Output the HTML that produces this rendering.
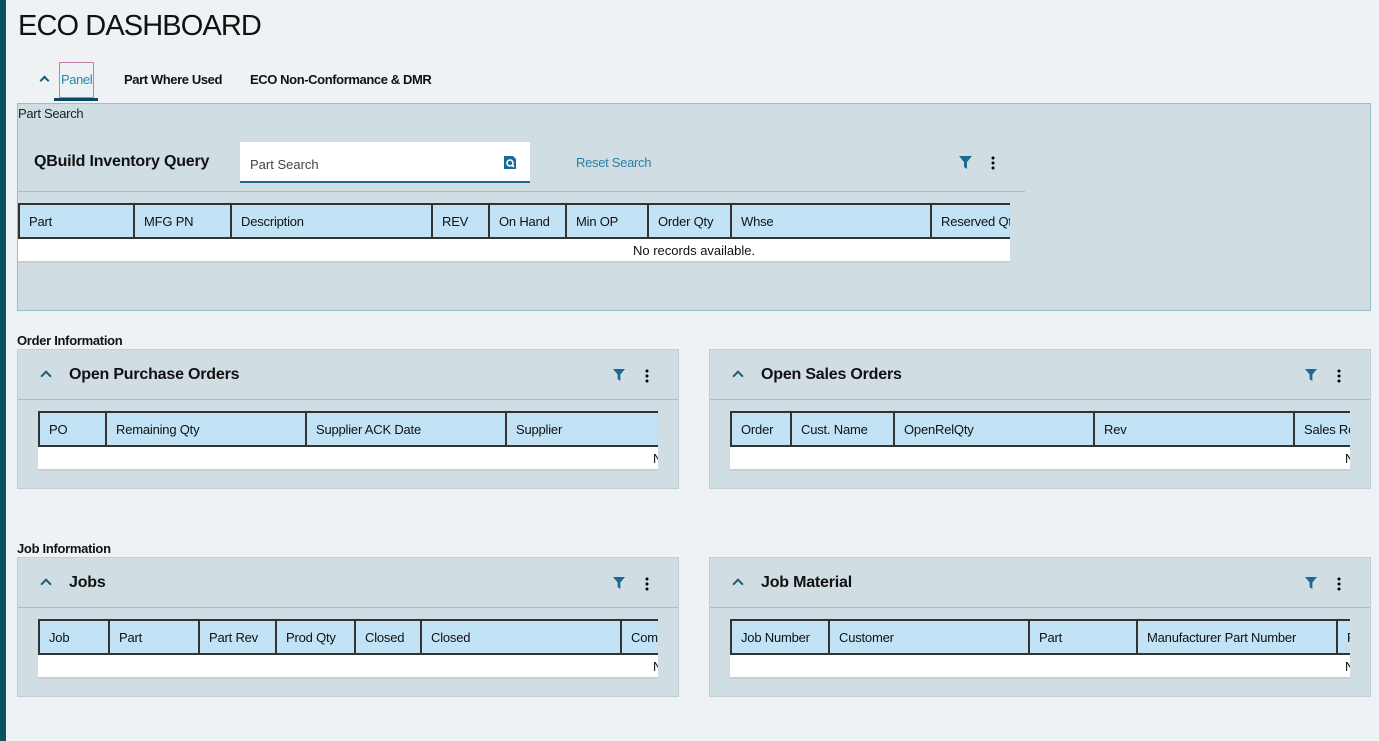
<!DOCTYPE html>
<html><head><meta charset="utf-8"><style>
*{box-sizing:border-box;margin:0;padding:0}
body{width:1379px;height:741px;background:#eef2f5;font-family:"Liberation Sans",sans-serif;color:#111;position:relative;overflow:hidden}
.abs{position:absolute}
.bar{left:0;top:0;width:6px;height:741px;background:#0b5063}
h1{position:absolute;left:18px;top:10px;font-weight:normal;font-size:29px;letter-spacing:-0.9px;color:#111}
.tab{position:absolute;top:72px;font-size:13px;font-weight:bold;color:#111;letter-spacing:-0.4px}
.card{position:absolute;background:#d0dee3;border:1px solid #bfd0d6}
.hline{position:absolute;height:1px;background:#9fc0cc}
.tbl{position:absolute;overflow:hidden}
.th{display:flex;height:36px;background:#c2e3f5;border-top:2px solid #333;border-bottom:2px solid #333;border-left:2px solid #333}
.th div{flex:none;border-right:2px solid #333;font-size:13px;padding:0 0 0 9px;line-height:34px;white-space:nowrap;overflow:hidden;letter-spacing:-0.2px}
.tb{height:24px;background:#fff;border-bottom:2px solid #ccc;font-size:13px;line-height:24px;position:relative}
.title{position:absolute;font-size:16px;font-weight:bold;color:#111;letter-spacing:-0.2px}
.chev{position:absolute;width:8px;height:8px;border-left:2px solid #1a5b78;border-top:2px solid #1a5b78;transform:rotate(45deg)}
.sec{position:absolute;font-size:13px;font-weight:bold;color:#111;letter-spacing:-0.3px}
</style></head><body>
<div class="abs bar"></div>
<h1>ECO DASHBOARD</h1>
<div class="chev" style="left:41px;top:77px;width:7px;height:7px"></div>
<div class="abs" style="left:59px;top:62px;width:35px;height:36px;border:1px solid #c080a8"></div>
<div class="tab" style="left:61px;color:#2a83a8;font-weight:normal">Panel</div>
<div class="abs" style="left:54px;top:98px;width:44px;height:3px;background:#0b4a63"></div>
<div class="tab" style="left:124px">Part Where Used</div>
<div class="tab" style="left:250px">ECO Non-Conformance &amp; DMR</div>

<div class="card" style="left:17px;top:103px;width:1354px;height:208px;border-color:#95bfcc"></div>
<div class="abs" style="left:18px;top:106px;font-size:13px;color:#222;letter-spacing:-0.3px">Part Search</div>
<div class="title" style="left:34px;top:153px;font-size:16px">QBuild Inventory Query</div>
<div class="abs" style="left:240px;top:142px;width:290px;height:41px;background:#fff;border-bottom:2px solid #1d6a93"></div>
<div class="abs" style="left:250px;top:157px;font-size:13px;color:#444">Part Search</div>
<svg class="abs" style="left:503px;top:155px" width="14" height="15" viewBox="0 0 14 15"><path d="M1 1h9l3 3v10H1z" fill="#1b6a94"/><circle cx="7" cy="8" r="3" fill="none" stroke="#fff" stroke-width="1.6"/><path d="M9 10l2 2" stroke="#fff" stroke-width="1.6"/></svg>
<div class="abs" style="left:576px;top:155px;font-size:13px;color:#2a7ea6;letter-spacing:-0.3px">Reset Search</div>
<svg class="abs" style="left:959px;top:156px" width="13" height="13" viewBox="0 0 13 13"><path d="M0 0h13L8 6v7L5 11V6z" fill="#1b6a94"/></svg>
<svg class="abs" style="left:991px;top:156px" width="4" height="14"><circle cx="2" cy="2" r="1.5"/><circle cx="2" cy="7" r="1.5"/><circle cx="2" cy="12" r="1.5"/></svg>
<div class="hline" style="left:18px;top:191px;width:1007px"></div>
<div class="tbl" style="left:18px;top:203px;width:992px">
<div class="th"><div style="width:115px">Part</div><div style="width:97px">MFG PN</div><div style="width:201px">Description</div><div style="width:57px">REV</div><div style="width:77px">On Hand</div><div style="width:82px">Min OP</div><div style="width:83px">Order Qty</div><div style="width:200px">Whse</div><div style="width:200px">Reserved Qty</div></div>
<div class="tb"><span style="position:absolute;left:615px">No records available.</span></div>
</div>

<div class="sec" style="left:17px;top:333px">Order Information</div>
<div class="sec" style="left:17px;top:541px">Job Information</div>

<div class="card" style="left:17px;top:349px;width:662px;height:140px"></div>
<div class="hline" style="left:18px;top:399px;width:660px"></div>
<div class="chev" style="left:42px;top:372px"></div>
<div class="title" style="left:69px;top:366px">Open Purchase Orders</div>
<svg class="abs" style="left:613px;top:369px" width="12" height="12" viewBox="0 0 13 13"><path d="M0 0h13L8 6v7L5 11V6z" fill="#1b6a94"/></svg>
<svg class="abs" style="left:645px;top:369px" width="4" height="14"><circle cx="2" cy="2" r="1.5"/><circle cx="2" cy="7" r="1.5"/><circle cx="2" cy="12" r="1.5"/></svg>
<div class="tbl" style="left:38px;top:411px;width:620px">
<div class="th"><div style="width:67px">PO</div><div style="width:200px">Remaining Qty</div><div style="width:200px">Supplier ACK Date</div><div style="width:200px">Supplier</div></div>
<div class="tb"><span style="position:absolute;left:615px">No</span></div>
</div>

<div class="card" style="left:709px;top:349px;width:662px;height:140px"></div>
<div class="hline" style="left:710px;top:399px;width:660px"></div>
<div class="chev" style="left:734px;top:372px"></div>
<div class="title" style="left:761px;top:366px">Open Sales Orders</div>
<svg class="abs" style="left:1305px;top:369px" width="12" height="12" viewBox="0 0 13 13"><path d="M0 0h13L8 6v7L5 11V6z" fill="#1b6a94"/></svg>
<svg class="abs" style="left:1337px;top:369px" width="4" height="14"><circle cx="2" cy="2" r="1.5"/><circle cx="2" cy="7" r="1.5"/><circle cx="2" cy="12" r="1.5"/></svg>
<div class="tbl" style="left:730px;top:411px;width:620px">
<div class="th"><div style="width:60px">Order</div><div style="width:103px">Cust. Name</div><div style="width:200px">OpenRelQty</div><div style="width:200px">Rev</div><div style="width:200px">Sales Rep</div></div>
<div class="tb"><span style="position:absolute;left:615px">No</span></div>
</div>

<div class="card" style="left:17px;top:557px;width:662px;height:140px"></div>
<div class="hline" style="left:18px;top:607px;width:660px"></div>
<div class="chev" style="left:42px;top:580px"></div>
<div class="title" style="left:69px;top:574px">Jobs</div>
<svg class="abs" style="left:613px;top:577px" width="12" height="12" viewBox="0 0 13 13"><path d="M0 0h13L8 6v7L5 11V6z" fill="#1b6a94"/></svg>
<svg class="abs" style="left:645px;top:577px" width="4" height="14"><circle cx="2" cy="2" r="1.5"/><circle cx="2" cy="7" r="1.5"/><circle cx="2" cy="12" r="1.5"/></svg>
<div class="tbl" style="left:38px;top:619px;width:620px">
<div class="th"><div style="width:70px">Job</div><div style="width:90px">Part</div><div style="width:77px">Part Rev</div><div style="width:79px">Prod Qty</div><div style="width:66px">Closed</div><div style="width:200px">Closed</div><div style="width:100px">Comp</div></div>
<div class="tb"><span style="position:absolute;left:615px">No</span></div>
</div>

<div class="card" style="left:709px;top:557px;width:662px;height:140px"></div>
<div class="hline" style="left:710px;top:607px;width:660px"></div>
<div class="chev" style="left:734px;top:580px"></div>
<div class="title" style="left:761px;top:574px">Job Material</div>
<svg class="abs" style="left:1305px;top:577px" width="12" height="12" viewBox="0 0 13 13"><path d="M0 0h13L8 6v7L5 11V6z" fill="#1b6a94"/></svg>
<svg class="abs" style="left:1337px;top:577px" width="4" height="14"><circle cx="2" cy="2" r="1.5"/><circle cx="2" cy="7" r="1.5"/><circle cx="2" cy="12" r="1.5"/></svg>
<div class="tbl" style="left:730px;top:619px;width:620px">
<div class="th"><div style="width:98px">Job Number</div><div style="width:200px">Customer</div><div style="width:108px">Part</div><div style="width:200px">Manufacturer Part Number</div><div style="width:100px">Part</div></div>
<div class="tb"><span style="position:absolute;left:615px">No</span></div>
</div>
</body></html>
